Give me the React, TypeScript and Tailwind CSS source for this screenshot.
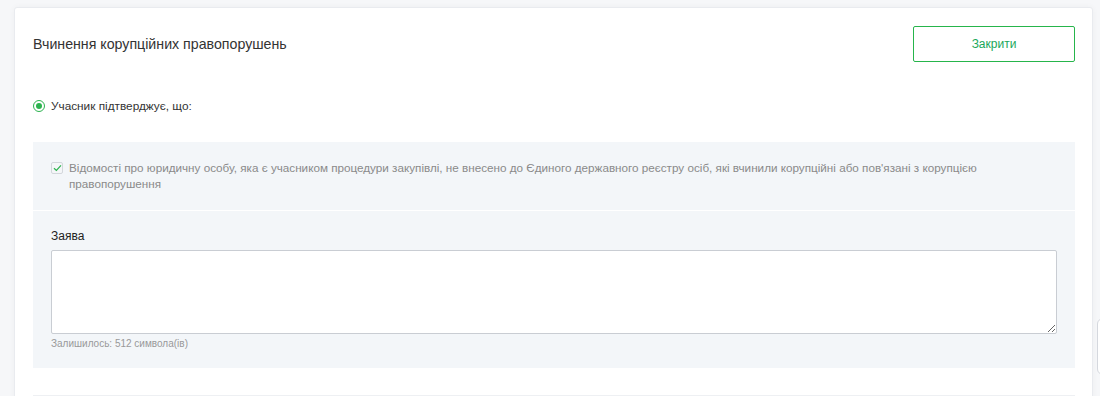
import React from 'react';

const font = { fontFamily: '"Liberation Sans", Arial, sans-serif' };

const RadioDot: React.FC = () => (
  <span className="flex h-3 w-3 shrink-0 items-center justify-center rounded-full border border-[#2cb34f] bg-white">
    <span className="h-[6px] w-[6px] rounded-full bg-[#2cb34f]" />
  </span>
);

const CheckMark: React.FC = () => (
  <span className="mt-[2px] flex h-3 w-3 shrink-0 items-center justify-center rounded-[2px] border border-[#d3d7dc] bg-[#f4f6f8]">
    <svg width="9" height="8" viewBox="0 0 9 8" fill="none">
      <path d="M1 4.2 L3.4 6.5 L8 1.3" stroke="#2cb34f" strokeWidth="1.2" />
    </svg>
  </span>
);

export default function App() {
  return (
    <div className="relative h-[396px] overflow-hidden bg-[#f6f7f9] pl-[14px] pr-[7px] pt-[7px]" style={font}>
      <div className="h-[420px] w-[1079px] rounded-[3px] border border-[#e9ebef] bg-white pl-[18px] pr-[17px] pt-[18px] shadow-[0_0_6px_rgba(0,0,0,0.04)]">
        {/* Header */}
        <div className="flex items-center justify-between">
          <h2 className="text-[14.2px] leading-[18px] text-[#333]">Вчинення корупційних правопорушень</h2>
          <button className="h-[36px] w-[162px] rounded-[2px] border border-[#26b54b] bg-white text-[12px] text-[#1aa75a]">
            Закрити
          </button>
        </div>

        {/* Radio */}
        <div className="mt-[36px] flex h-4 items-center gap-[6px]">
          <RadioDot />
          <span className="text-[11.8px] leading-4 text-[#333]">Учасник підтверджує, що:</span>
        </div>

        {/* Gray panel */}
        <div className="mt-[28px] bg-[#f3f6f9]">
          <div className="flex gap-[6px] px-[18px] pb-[18px] pt-[18px]">
            <CheckMark />
            <p className="text-[11.7px] leading-4 text-[#8a8a8a]">
              Відомості про юридичну особу, яка є учасником процедури закупівлі, не внесено до Єдиного державного реєстру осіб, які вчинили корупційні або пов'язані з корупцією правопорушення
            </p>
          </div>
          <div className="h-[1px] bg-white" />
          <div className="px-[18px] pb-[18px] pt-[17px]">
            <div className="text-[12px] leading-4 text-[#222]">Заява</div>
            <textarea className="mt-[6px] block h-[84px] w-full resize-y rounded-[2px] border border-[#c9cdd3] bg-white" />
            <div className="mt-[4px] text-[10px] leading-3 text-[#999]">Залишилось: 512 символа(ів)</div>
          </div>
        </div>

        <div className="mt-[27px] border-t border-[#eef0f3]" />
      </div>

      {/* floating side widget */}
      <div className="absolute left-[1097px] top-[318px] h-[57px] w-[20px] rounded-l-[6px] border border-[#d5d8de] bg-white" />
    </div>
  );
}
